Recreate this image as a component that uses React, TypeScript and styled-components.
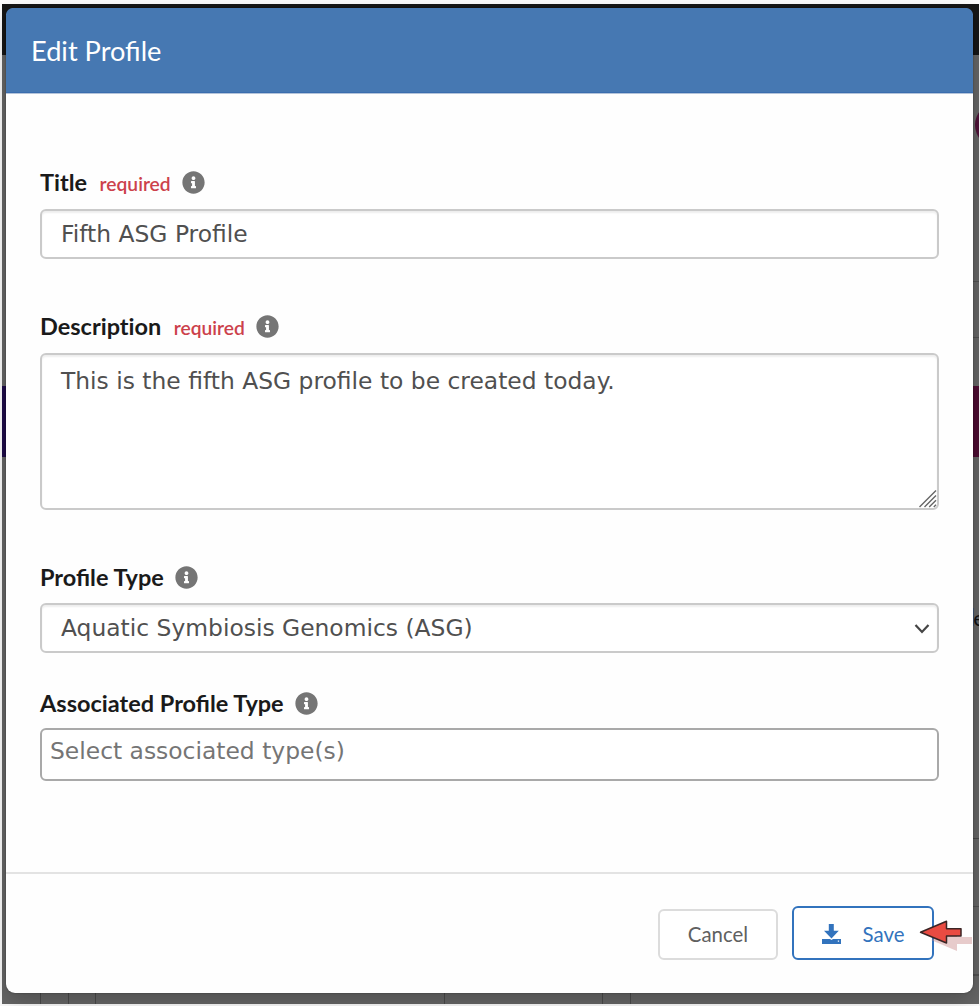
import React from "react";
import styled, { createGlobalStyle } from "styled-components";
import { FaInfoCircle } from "react-icons/fa";

const GlobalStyle = createGlobalStyle`
  *, *::before, *::after { box-sizing: border-box; }
  body { margin: 0; background: #fcfcfc; font-family: Lato, sans-serif; }
`;

const Screen = styled.div`
  position: relative;
  width: 980px;
  height: 1006px;
  padding: 8px 7px 13px 6px;
  overflow: hidden;
`;

const DimmedPage = styled.div`
  position: absolute;
  inset: 4px 1px 2px 2px;
  overflow: hidden;
  background: #666;
`;

const Navbar = styled.div`
  height: 51px;
  background: #161616;
`;

const Block = styled.div<{
  $x: number;
  $y: number;
  $w: number;
  $h: number;
  $color: string;
  $round?: boolean;
}>`
  position: absolute;
  left: ${(p) => p.$x}px;
  top: ${(p) => p.$y}px;
  width: ${(p) => p.$w}px;
  height: ${(p) => p.$h}px;
  background: ${(p) => p.$color};
  border-radius: ${(p) => (p.$round ? "50%" : "0")};
`;

const Behind = styled.span`
  position: absolute;
  left: 966px;
  top: 600px;
  color: #111;
  font: 22px/28px Lato, sans-serif;
`;

const Dialog = styled.section`
  position: relative;
  display: flex;
  flex-direction: column;
  width: 966.5px;
  height: 985px;
  border-radius: 9px;
  background: #fefefe;
  box-shadow: 0 0 2px rgba(0, 0, 0, 0.4), 0 8px 22px rgba(0, 0, 0, 0.22);
`;

const Header = styled.header`
  display: flex;
  align-items: center;
  height: 86px;
  padding: 0 25px;
  border-bottom: 1px solid #b4c4da;
  border-radius: 7px 7px 0 0;
  background: #4678b2;
  box-shadow: inset 0 -1px #3a6dae;
`;

const Heading = styled.h1`
  margin: 0;
  color: #fff;
  font-size: 27.2px;
  font-weight: 400;
  line-height: 36px;
`;

const Form = styled.form`
  flex: 1;
  padding: 72px 34px 0;
`;

const Field = styled.div<{ $gap: number }>`
  margin-bottom: ${(p) => p.$gap}px;
`;

const LabelRow = styled.div<{ $space: number }>`
  display: flex;
  align-items: center;
  height: 32px;
  margin-bottom: ${(p) => p.$space}px;
  white-space: nowrap;
`;

const Label = styled.label<{ $plain?: boolean }>`
  color: #1a1a1a;
  font-size: 23.5px;
  font-weight: 700;
  font-variant-ligatures: ${(p) => (p.$plain ? "none" : "normal")};
`;

const Required = styled.span`
  margin: 3px 0 0 12.5px;
  color: #cc414b;
  font-size: 19.2px;
  font-weight: 600;
`;

const InfoIcon = styled(FaInfoCircle)`
  width: 23px;
  height: 23px;
  margin-left: 11px;
  color: #757575;
`;

const control = `
  display: block;
  width: 899px;
  margin: 0;
  border: 2px solid #cacaca;
  border-radius: 6px;
  outline: none;
  background: #fff;
  box-shadow: inset 0 2px 2px rgba(0, 0, 0, 0.07);
  color: #505050;
  font-family: "DejaVu Sans", sans-serif;
  font-size: 23.4px;
`;

const Input = styled.input`
  ${control}
  height: 50px;
  padding: 0 19px;
`;

const Relative = styled.div`
  position: relative;
  width: 899px;
`;

const TextArea = styled.textarea`
  ${control}
  height: 157px;
  padding: 10px 19px;
  line-height: 32px;
  resize: none;
  overflow: hidden;
`;

const Select = styled.select`
  ${control}
  height: 50px;
  padding: 0 19px 1px;
  appearance: none;
`;

const TypePicker = styled.input`
  ${control}
  height: 53px;
  padding: 0 8px 7px;
  border-color: #a9a9a9;
  box-shadow: none;
  &::placeholder { color: #757575; opacity: 1; }
`;

const Grip = styled.svg`
  position: absolute;
  right: 2px;
  bottom: 2px;
`;

const Chevron = styled.svg`
  position: absolute;
  right: 9px;
  top: 20px;
  pointer-events: none;
`;

const Footer = styled.footer`
  display: flex;
  justify-content: flex-end;
  align-items: center;
  gap: 14px;
  height: 121px;
  padding: 0 38.5px 1px 0;
  border-top: 2px solid #e3e3e3;
`;

const Button = styled.button<{ $primary?: boolean }>`
  display: flex;
  align-items: center;
  justify-content: center;
  gap: ${(p) => (p.$primary ? 22 : 0)}px;
  width: ${(p) => (p.$primary ? 142 : 120)}px;
  height: ${(p) => (p.$primary ? 54 : 51)}px;
  margin-top: ${(p) => (p.$primary ? 0 : 2)}px;
  padding: ${(p) => (p.$primary ? "1px 0 0" : "0")};
  border: 2px solid ${(p) => (p.$primary ? "#3273bd" : "#dcdcdc")};
  border-radius: 6px;
  background: #fff;
  color: ${(p) => (p.$primary ? "#3273bd" : "#606060")};
  font-family: Lato, sans-serif;
  font-size: 20.4px;
`;

const Pointer = styled.svg`
  position: absolute;
  left: 908.5px;
  top: 908px;
`;

function DownloadIcon() {
  return (
    <svg width="19" height="20" viewBox="0 0 19 20" fill="currentColor">
      <path d="M6.8 0h5v6.8h5L9.5 14.6 2 6.8h4.8z" />
      <path d="M0 15h8l1.5 1 1.5-1H19v5H0zM15.8 16.5v1.2h1.3v-1.2z" fillRule="evenodd" />
    </svg>
  );
}

const blocks = [
  { $x: 973, $y: 99, $w: 44, $h: 44, $color: "#4f1238", $round: true },
  { $x: 0, $y: 382, $w: 5, $h: 71, $color: "#1e0b49" },
  { $x: 970, $y: 382, $w: 8, $h: 71, $color: "#4d0d32" },
  { $x: 970, $y: 277, $w: 8, $h: 1, $color: "#505050" },
  { $x: 970, $y: 333, $w: 8, $h: 1, $color: "#505050" },
  { $x: 970, $y: 834, $w: 8, $h: 1, $color: "#484848" },
  { $x: 970, $y: 902, $w: 8, $h: 1, $color: "#505050" },
  { $x: 970, $y: 970, $w: 8, $h: 2, $color: "#505050" },
  ...[38, 66, 93, 442, 600, 628].map((x) => ({
    $x: x, $y: 988, $w: 1, $h: 12, $color: "#4a4a4a",
  })),
];

export default function App() {
  return (
    <Screen>
      <GlobalStyle />
      <DimmedPage>
        <Navbar />
        {blocks.map((b, i) => <Block key={i} {...b} />)}
        <Behind>le</Behind>
        <Block $x={970} $y={604} $w={2} $h={18} $color="#465a78" />
      </DimmedPage>
      <Dialog>
        <Header><Heading>Edit Profile</Heading></Header>
        <Form>
          <Field $gap={51}>
            <LabelRow $space={11}>
              <Label htmlFor="title">Title</Label>
              <Required>required</Required>
              <InfoIcon />
            </LabelRow>
            <Input id="title" defaultValue="Fifth ASG Profile" />
          </Field>
          <Field $gap={51}>
            <LabelRow $space={11}>
              <Label htmlFor="description" $plain>Description</Label>
              <Required>required</Required>
              <InfoIcon />
            </LabelRow>
            <Relative>
              <TextArea id="description" defaultValue="This is the fifth ASG profile to be created today." />
              <Grip width="18" height="18" viewBox="0 0 18 18" stroke="#666" strokeWidth="1.4">
                <path d="M.5 17L17 .5M5.5 17L17 5.5M10.2 17L17 10.2M14.8 17L17 14.8" />
              </Grip>
            </Relative>
          </Field>
          <Field $gap={34}>
            <LabelRow $space={10}>
              <Label htmlFor="type">Profile Type</Label>
              <InfoIcon />
            </LabelRow>
            <Relative>
              <Select id="type"><option>Aquatic Symbiosis Genomics (ASG)</option></Select>
              <Chevron width="16" height="12" viewBox="0 0 16 12" fill="none" stroke="#454545" strokeWidth="2.2">
                <path d="M1.5 2L8 9L14.5 2" />
              </Chevron>
            </Relative>
          </Field>
          <Field $gap={0}>
            <LabelRow $space={9}>
              <Label htmlFor="associated">Associated Profile Type</Label>
              <InfoIcon />
            </LabelRow>
            <TypePicker id="associated" placeholder="Select associated type(s)" />
          </Field>
        </Form>
        <Footer>
          <Button>Cancel</Button>
          <Button $primary><DownloadIcon />Save</Button>
        </Footer>
        <Pointer width="58" height="40" viewBox="0 0 58 40">
          <path d="M16 24L42 14V21H57V28H42V35Z" fill="#c98585" opacity=".42" />
          <path d="M5.5 16.3L31.5 5.3V12.7H46V20H31.5V27Z" fill="#e94b42" stroke="#3b2525" strokeWidth="1.5" strokeLinejoin="round" />
        </Pointer>
      </Dialog>
    </Screen>
  );
}
